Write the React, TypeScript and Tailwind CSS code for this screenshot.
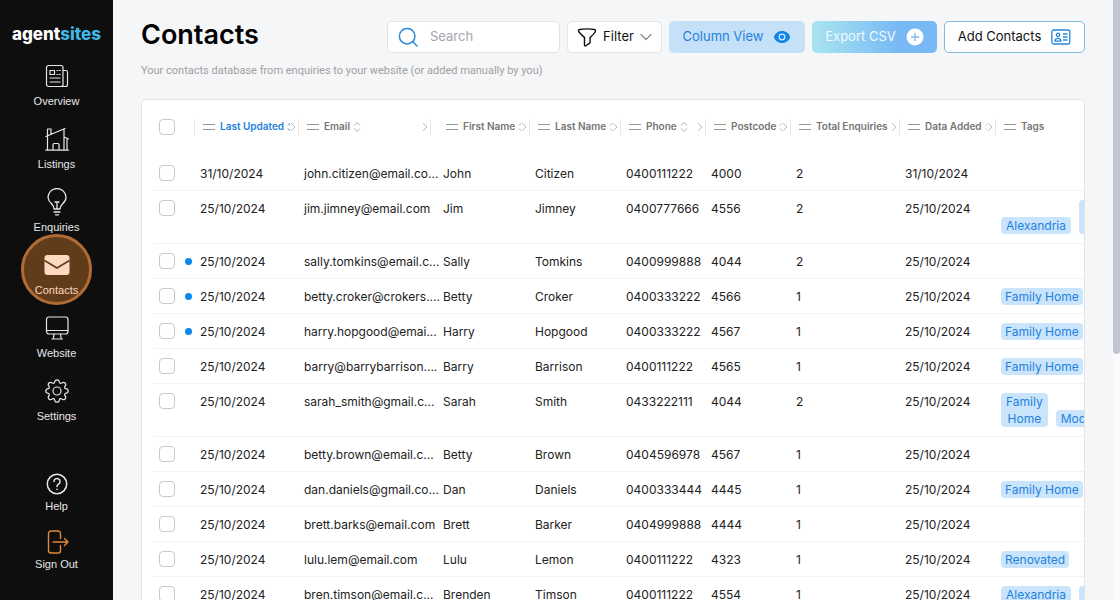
import type { ReactNode } from 'react';
import clsx from 'clsx';

type Contact = {
  updated: string;
  email: string;
  first: string;
  last: string;
  phone: string;
  postcode: string;
  enquiries: number;
  added: string;
  unread?: boolean;
  tags?: string[];
};

const contacts: Contact[] = [
  { updated: '31/10/2024', email: 'john.citizen@email.co...', first: 'John', last: 'Citizen', phone: '0400111222', postcode: '4000', enquiries: 2, added: '31/10/2024' },
  { updated: '25/10/2024', email: 'jim.jimney@email.com', first: 'Jim', last: 'Jimney', phone: '0400777666', postcode: '4556', enquiries: 2, added: '25/10/2024', tags: ['Alexandria', 'Family Home'] },
  { updated: '25/10/2024', email: 'sally.tomkins@email.c...', first: 'Sally', last: 'Tomkins', phone: '0400999888', postcode: '4044', enquiries: 2, added: '25/10/2024', unread: true },
  { updated: '25/10/2024', email: 'betty.croker@crokers....', first: 'Betty', last: 'Croker', phone: '0400333222', postcode: '4566', enquiries: 1, added: '25/10/2024', unread: true, tags: ['Family Home'] },
  { updated: '25/10/2024', email: 'harry.hopgood@emai...', first: 'Harry', last: 'Hopgood', phone: '0400333222', postcode: '4567', enquiries: 1, added: '25/10/2024', unread: true, tags: ['Family Home'] },
  { updated: '25/10/2024', email: 'barry@barrybarrison....', first: 'Barry', last: 'Barrison', phone: '0400111222', postcode: '4565', enquiries: 1, added: '25/10/2024', tags: ['Family Home'] },
  { updated: '25/10/2024', email: 'sarah_smith@gmail.c...', first: 'Sarah', last: 'Smith', phone: '0433222111', postcode: '4044', enquiries: 2, added: '25/10/2024', tags: ['Family Home', 'Modern'] },
  { updated: '25/10/2024', email: 'betty.brown@email.c...', first: 'Betty', last: 'Brown', phone: '0404596978', postcode: '4567', enquiries: 1, added: '25/10/2024' },
  { updated: '25/10/2024', email: 'dan.daniels@gmail.co...', first: 'Dan', last: 'Daniels', phone: '0400333444', postcode: '4445', enquiries: 1, added: '25/10/2024', tags: ['Family Home'] },
  { updated: '25/10/2024', email: 'brett.barks@email.com', first: 'Brett', last: 'Barker', phone: '0404999888', postcode: '4444', enquiries: 1, added: '25/10/2024' },
  { updated: '25/10/2024', email: 'lulu.lem@email.com', first: 'Lulu', last: 'Lemon', phone: '0400111222', postcode: '4323', enquiries: 1, added: '25/10/2024', tags: ['Renovated'] },
  { updated: '25/10/2024', email: 'bren.timson@email.c...', first: 'Brenden', last: 'Timson', phone: '0400111222', postcode: '4554', enquiries: 1, added: '25/10/2024', tags: ['Alexandria', 'House'] },
];

const columns = [
  { label: 'Last Updated', width: 'w-[104px]', active: true },
  { label: 'Email', width: 'w-[139px]', inset: true },
  { label: 'First Name', width: 'w-[92px]' },
  { label: 'Last Name', width: 'w-[91px]' },
  { label: 'Phone', width: 'w-[85px]' },
  { label: 'Postcode', width: 'w-[85px]' },
  { label: 'Total Enquiries', width: 'w-[109px]' },
  { label: 'Data Added', width: 'w-[96px]' },
];

function Icon({ children, className }: { children: ReactNode; className?: string }) {
  return (
    <svg
      viewBox="0 0 24 24"
      fill="none"
      stroke="currentColor"
      strokeWidth="1.2"
      strokeLinecap="round"
      strokeLinejoin="round"
      className={clsx('shrink-0', className ?? 'size-6')}
      aria-hidden="true"
    >
      {children}
    </svg>
  );
}

const OverviewIcon = () => (
  <Icon>
    <path d="M18 20.5a2 2 0 0 1-2 2H3.500a2 2 0 0 1-2-2v-17a2 2 0 0 1 2-2H16a2 2 0 0 1 2 2zM18 6.500h3a1.500 1.500 0 0 1 1.500 1.500v12.500a2 2 0 0 1-2 2H16" />
    <path d="M5 6.500h4.500v4H5zM12 6.500h.8M14.500 6.500h.8M12 10.500h.8M14.500 10.500h.8M5 14h10M5 18h10" />
  </Icon>
);

const ListingsIcon = () => (
  <Icon>
    <path d="M.8 23.200h22.700M2.500 23V8.500M.8 9.500 20 1.500M19 2v21M19 10l4.500 2M22 11.500V23M2.500 8V2h3.500v5M8 23v-5.500a1 1 0 0 1 1-1h4a1 1 0 0 1 1 1V23" />
  </Icon>
);

const EnquiriesIcon = () => (
  <svg
    viewBox="0 0 24 28"
    className="h-7 w-6"
    fill="none"
    stroke="currentColor"
    strokeWidth="1.3"
    strokeLinecap="round"
    strokeLinejoin="round"
    aria-hidden="true"
  >
    <path d="M9 21c0-2.300-1-3.800-2.500-5.500A9 9 0 0 1 3 9.500a9 9 0 0 1 18 0c0 2.500-1.500 4.500-3.500 6.500C16 17.500 15 19 15 21zM12 21v-7M10 14h4M9 24h6M10.500 26.800h3" />
  </svg>
);

const MailIcon = () => (
  <svg viewBox="0 0 26 22" className="h-[22px] w-[26px]" aria-hidden="true">
    <rect x="0.500" y="1" width="25" height="20" rx="3" fill="#fdd9bf" />
    <path d="m.5 6.500 12.500 7.500 12.500-7.500" fill="none" stroke="#613c1b" strokeWidth="1.600" />
  </svg>
);

const WebsiteIcon = () => (
  <Icon>
    <rect x="1.500" y="1" width="21.500" height="17" rx="2.500" />
    <path d="M1.500 14.500H23M9 18l-.7 5M15.500 18l.7 5M7 23h10.500" />
  </Icon>
);

const SettingsIcon = () => (
  <Icon>
    <circle cx="12" cy="12" r="4" />
    <path d="M9.600 3.200Q10 .8 12 .8t2.400 2.400q.5 1.900 2.200.9 2-1.600 3.500-.1t-.2 3.500q-.9 1.700.9 2.200 2.400.3 2.400 2.300t-2.400 2.400q-1.800.5-.9 2.100 1.700 2 .2 3.500t-3.500-.1q-1.700-.9-2.200.9-.4 2.400-2.400 2.400t-2.400-2.400q-.5-1.800-2.200-.9-2 1.600-3.500.1t.2-3.500q.9-1.600-.9-2.100Q.8 14 .8 12t2.400-2.300q1.800-.5.9-2.200-1.700-2-.2-3.500t3.500.1q1.700 1 2.200-.9z" />
  </Icon>
);

const HelpIcon = () => (
  <Icon>
    <circle cx="12" cy="12" r="9.700" strokeWidth="1.500" />
    <path d="M9 9.500a3 3 0 1 1 4.500 2.600c-1 .6-1.500 1.200-1.500 2.400M12 17.300v.2" strokeWidth="1.500" />
  </Icon>
);

const SignOutIcon = () => (
  <Icon className="size-6 text-[#e08a3a]">
    <path d="M15.500 8.500V3.500a2.500 2.500 0 0 0-2.500-2.500H6a2.500 2.500 0 0 0-2.500 2.500v17A2.500 2.500 0 0 0 6 23h7a2.500 2.500 0 0 0 2.500-2.500V15.500M8 12h15M19.500 8.500 23 12l-3.500 3.500" strokeWidth="1.400" />
  </Icon>
);

const mainLinks = [
  { label: 'Overview', icon: OverviewIcon },
  { label: 'Listings', icon: ListingsIcon },
  { label: 'Enquiries', icon: EnquiriesIcon },
  { label: 'Contacts', icon: MailIcon, current: true },
  { label: 'Website', icon: WebsiteIcon },
  { label: 'Settings', icon: SettingsIcon },
];

const footerLinks = [
  { label: 'Help', icon: HelpIcon },
  { label: 'Sign Out', icon: SignOutIcon },
];

type NavLinkProps = { label: string; icon: () => ReactNode; current?: boolean; tight?: boolean };

function NavLink({ label, icon: Glyph, current, tight }: NavLinkProps) {
  return (
    <a
      href="#"
      className={clsx('relative flex flex-col items-center text-[11px] leading-4 text-[#e6e6e6]', !tight && 'gap-[3px]')}
      aria-current={current ? 'page' : undefined}
    >
      {current && (
        <span className="absolute -top-[17px] size-[71px] rounded-full border-[3px] border-[#b06c34] bg-[#613c1b]" />
      )}
      <span className="relative flex h-7 items-center">
        <Glyph />
      </span>
      <span className={clsx('relative', current && 'text-[#fdd9bf]')}>{label}</span>
    </a>
  );
}

function Sidebar() {
  return (
    <aside className="flex w-[113px] shrink-0 flex-col bg-[#0e0e0e] pt-6">
      <div className="text-center text-[17px] leading-5 font-extrabold text-white">
        agent<span className="text-[#3fb8e4]">sites</span>
      </div>
      <nav className="mt-[18px] flex flex-col gap-4 font-['Liberation_Sans',sans-serif]">
        {mainLinks.map((link) => (
          <NavLink key={link.label} {...link} />
        ))}
      </nav>
      <nav className="mt-[46px] flex flex-col gap-[14px] font-['Liberation_Sans',sans-serif]">
        {footerLinks.map((link) => (
          <NavLink key={link.label} {...link} tight />
        ))}
      </nav>
    </aside>
  );
}

function Toolbar() {
  return (
    <div className="flex gap-[7px] text-[13px]">
      <label className="flex h-8 w-[173px] items-center gap-3 rounded-[5px] border border-[#e2e3e5] bg-white px-2.5">
        <Icon className="size-5 text-[#2d8ad8]">
          <circle cx="11" cy="11" r="9.300" strokeWidth="1.800" />
          <path d="m17.800 17.800 5 5" strokeWidth="1.800" />
        </Icon>
        <input
          type="search"
          aria-label="Search"
          placeholder="Search"
          className="w-full min-w-0 bg-transparent outline-none placeholder:text-[#a3a7ad]"
        />
      </label>
      <button className="flex h-8 w-[95px] items-center justify-center gap-1.5 rounded-[5px] border border-[#e2e3e5] bg-white text-[#111]">
        <Icon className="size-5">
          <path d="M3 3q9-1.500 18 0c1.300.3 1.500 1.300 1 2.300-1.300 3-3.800 5-6.300 7.200v6.500L10.500 22.500c-.8.500-1.500.2-1.500-.8v-9.200C6 10 3.500 8 2 5.300 1.500 4.300 1.700 3.300 3 3z" strokeWidth="1.700" />
        </Icon>
        Filter
        <Icon className="size-3 text-[#8d8d8d]">
          <path d="m2 7 10 10L22 7" strokeWidth="2.500" />
        </Icon>
      </button>
      <button className="flex h-8 w-[136px] items-center justify-center gap-2.5 rounded-[5px] bg-[#c5e0f7] text-[#1e82dc]">
        Column View
        <svg viewBox="0 0 18 14" className="h-[14px] w-[18px]" aria-hidden="true">
          <path d="M9 1C5 1 2 3.500.8 7 2 10.500 5 13 9 13s7-2.500 8.200-6C16 3.500 13 1 9 1z" fill="#0f86ea" />
          <circle cx="9" cy="7" r="2.800" fill="none" stroke="#d3e8fa" strokeWidth="1.300" />
        </svg>
      </button>
      <button className="flex h-8 w-[125px] items-center justify-center gap-2.5 rounded-[5px] bg-linear-to-r from-[#a9e5ef] to-[#78b9f5] to-70% text-[#f0faff]">
        Export CSV
        <svg viewBox="0 0 18 18" className="size-[18px]" aria-hidden="true">
          <circle cx="9" cy="9" r="8.500" fill="#fff" />
          <path d="M9 5v8M5 9h8" stroke="#7fbcf5" strokeWidth="1.300" />
        </svg>
      </button>
      <button className="flex h-8 w-[141px] items-center justify-center gap-2.5 rounded-[5px] border border-[#7fb9dc] bg-white text-[#111]">
        Add Contacts
        <svg viewBox="0 0 20 16" className="h-4 w-5" fill="none" stroke="#2686dc" strokeWidth="1.300" aria-hidden="true">
          <rect x="0.800" y="1" width="18" height="14" rx="2" />
          <circle cx="7" cy="5.800" r="1.700" />
          <path d="M4 12.200c0-3.800 6-3.800 6 0zM12 5h4.500M12 8h4.500M12 11h4.500" />
        </svg>
      </button>
    </div>
  );
}

function ColumnHeader({ label, active, inset, last }: { label: string; active?: boolean; inset?: boolean; last?: boolean }) {
  return (
    <div className={clsx('flex h-4 items-center border-[#e6e6e6] pl-2', !last && 'border-r', inset && 'mr-[7px]')}>
      <svg viewBox="0 0 12 6" className="mr-[5px] h-1.5 w-3 shrink-0" stroke="#969696" aria-hidden="true">
        <path d="M0 .5h12M0 5.500h12" />
      </svg>
      <span className={clsx('shrink-0 whitespace-nowrap', active ? 'text-[#1e82dc]' : 'text-[#757575]')}>{label}</span>
      {!last && (
        <>
          <span className="ml-[3px] flex min-w-0 flex-1 overflow-hidden">
            <svg viewBox="0 0 8 12" className={clsx('h-3 w-2 shrink-0', active ? 'text-[#1e82dc]' : 'text-[#aaa]')} fill="none" stroke="currentColor" aria-hidden="true">
              <path d="M1 4.500 4 1.500l3 3M1 7.500l3 3 3-3" />
            </svg>
          </span>
          <svg viewBox="0 0 6 10" className="mr-0.5 h-2.5 w-1.5 shrink-0" fill="none" stroke="#bbb" aria-hidden="true">
            <path d="m1 1 4 4-4 4" />
          </svg>
        </>
      )}
    </div>
  );
}

function Checkbox({ label }: { label: string }) {
  return (
    <input
      type="checkbox"
      aria-label={label}
      className="block size-4 appearance-none rounded-[4px] border border-[#c9c9c9] bg-white checked:bg-[#1e82dc]"
    />
  );
}

function ContactRow({ contact }: { contact: Contact }) {
  const tags = contact.tags ?? [];
  const tall = tags.length > 1;

  return (
    <tr className={clsx('border-b border-[#f3f3f3] align-top *:pt-[9px] *:pb-2 *:pl-[5px]', tall && 'h-[53px]')}>
      <td>
        <div className="flex items-center justify-between pr-[3px]">
          <Checkbox label={`Select ${contact.first} ${contact.last}`} />
          {contact.unread && <span className="size-[7px] rounded-full bg-[#0f86ea]" />}
        </div>
      </td>
      <td>{contact.updated}</td>
      <td className="whitespace-nowrap">{contact.email}</td>
      <td>{contact.first}</td>
      <td>{contact.last}</td>
      <td>{contact.phone}</td>
      <td>{contact.postcode}</td>
      <td>{contact.enquiries}</td>
      <td>{contact.added}</td>
      <td>
        <div className="flex items-end gap-2">
          {tags.map((tag) => (
            <span
              key={tag}
              className={clsx('rounded-[4px] bg-[#cae4fb] text-center text-[#1e82dc]', tall ? 'w-min px-[5px]' : 'px-1 whitespace-nowrap')}
            >
              {tag}
            </span>
          ))}
        </div>
      </td>
    </tr>
  );
}

export default function App() {
  return (
    <div className="flex h-screen overflow-hidden bg-[#f5f6f8] font-['Inter','Liberation_Sans',sans-serif] text-[#222]">
      <Sidebar />
      <main className="min-w-0 flex-1 px-7 pt-[21px]">
        <header className="flex items-start justify-between">
          <h1 className="text-[27px] leading-7 font-semibold text-black">Contacts</h1>
          <Toolbar />
        </header>
        <p className="mt-2.5 font-['Roboto','Liberation_Sans',sans-serif] text-[11px] leading-4 text-[#a0a0a0]">
          Your contacts database from enquiries to your website (or added manually by you)
        </p>
        <section className="mt-5 overflow-hidden rounded-[5px] border border-[#e3e4e6] bg-white pl-3">
          <table className="w-[1040px] table-fixed text-left text-xs leading-[17px]">
            <thead>
              <tr className="h-14 text-[10px] *:pb-[3px] *:font-semibold">
                <th className="w-[41px]">
                  <div className="flex h-4 items-center border-r border-[#e6e6e6] pl-[5px]">
                    <Checkbox label="Select all contacts" />
                  </div>
                </th>
                {columns.map(({ width, ...column }) => (
                  <th key={column.label} className={width}>
                    <ColumnHeader {...column} />
                  </th>
                ))}
                <th>
                  <ColumnHeader label="Tags" last />
                </th>
              </tr>
            </thead>
            <tbody>
              {contacts.map((contact) => (
                <ContactRow key={contact.email} contact={contact} />
              ))}
            </tbody>
          </table>
        </section>
      </main>
      <div className="w-[7px] shrink-0 bg-[#fafafa]">
        <div className="h-[59%] rounded-b-full bg-[#c1c5d3]" />
      </div>
    </div>
  );
}
